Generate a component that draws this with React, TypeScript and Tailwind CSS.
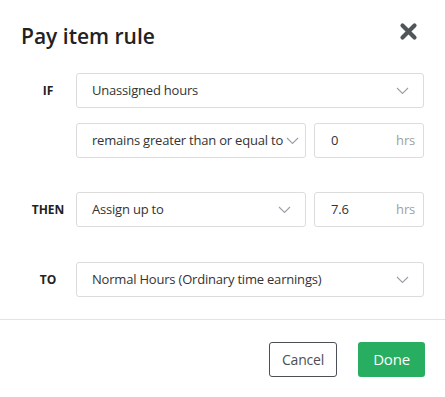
import React from 'react';

function Chevron() {
  return (
    <svg width="13" height="8" viewBox="0 0 13 8" fill="none" className="shrink-0">
      <path d="M1 1l5.5 5.5L12 1" stroke="#9aa0a6" strokeWidth="1.1" />
    </svg>
  );
}

function SelectBox({ value, className = '' }: { value: string; className?: string }) {
  return (
    <div
      className={`min-w-0 h-[35px] flex items-center justify-between pl-[15px] pr-[14px] border border-[#dcdcdc] rounded-[3px] bg-white text-[13px] tracking-[-0.2px] text-[#333] ${className}`}
    >
      <span className="whitespace-nowrap">{value}</span>
      <Chevron />
    </div>
  );
}

function HoursInput({ value }: { value: string }) {
  return (
    <div className="shrink-0 w-[110px] h-[35px] flex items-center justify-between pl-[16px] pr-[8px] border border-[#dcdcdc] rounded-[3px] bg-white text-[13px] tracking-[-0.2px]">
      <span className="text-[#333]">{value}</span>
      <span className="text-[#a0a0a0]">hrs</span>
    </div>
  );
}

function Label({ children }: { children: React.ReactNode }) {
  return (
    <div className="w-[56px] shrink-0 text-center text-[12px] font-bold text-[#222] h-[35px] flex items-center justify-center">
      {children}
    </div>
  );
}

export default function App() {
  return (
    <div
      className="w-[445px] h-[397px] bg-white"
      style={{ fontFamily: '"Open Sans", "Noto Sans", sans-serif' }}
    >
      <div className="flex items-start justify-between pl-[21px] pr-[27px] pt-[21px]">
        <h1 className="text-[21px] font-semibold text-[#222] leading-[30px]">Pay item rule</h1>
        <svg width="19" height="19" viewBox="0 0 19 19" className="mt-[1px]">
          <path d="M3.5 3.5l12 12M15.5 3.5l-12 12" stroke="#50555c" strokeWidth="4.2" strokeLinecap="round" />
        </svg>
      </div>

      <div className="pl-[20px] pr-[21px] pt-[22px] flex flex-col">
        <div className="flex">
          <Label>IF</Label>
          <SelectBox value="Unassigned hours" className="flex-1" />
        </div>
        <div className="flex mt-[15px] pl-[56px] gap-[8px]">
          <SelectBox value="remains greater than or equal to" className="flex-1 !pr-[6px]" />
          <HoursInput value="0" />
        </div>
        <div className="flex mt-[34px]">
          <Label>THEN</Label>
          <div className="flex flex-1 gap-[8px]">
            <SelectBox value="Assign up to" className="flex-1" />
            <HoursInput value="7.6" />
          </div>
        </div>
        <div className="flex mt-[35px]">
          <Label>TO</Label>
          <SelectBox value="Normal Hours (Ordinary time earnings)" className="flex-1" />
        </div>
      </div>

      <div className="mt-[22px] border-t border-[#e3e3e3]" />

      <div className="flex justify-end gap-[21px] pr-[20px] pt-[22px]">
        <button className="w-[68px] h-[35px] border border-[#4b5058] rounded-[3px] text-[14px] tracking-[-0.2px] text-[#4b5058] bg-white">
          Cancel
        </button>
        <button className="w-[67px] h-[35px] rounded-[3px] bg-[#27ae60] text-white text-[15px] tracking-[-0.2px]">
          Done
        </button>
      </div>
    </div>
  );
}
